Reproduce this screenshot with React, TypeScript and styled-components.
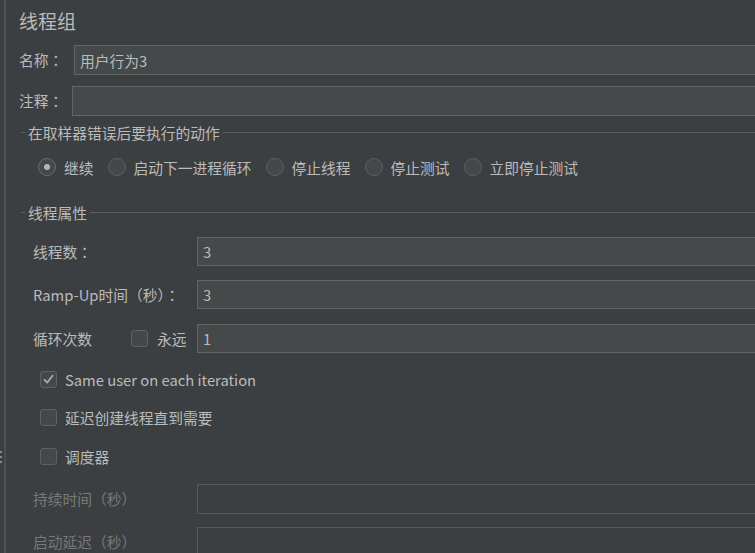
import styled, { createGlobalStyle } from "styled-components"

const GlobalStyle = createGlobalStyle`
  html, body {
    margin: 0;
    padding: 0;
    background: #3c3f41;
    overflow: hidden;
  }
  body {
    font-family: "Noto Sans CJK SC", "Noto Sans", sans-serif;
    color: #bbbbbb;
  }
`

const Page = styled.div`
  display: flex;
  width: 755px;
  height: 553px;
  overflow: hidden;
  background: #3c3f41;
`

const Splitter = styled.div`
  position: relative;
  width: 4px;
  flex-shrink: 0;
  border-right: 2px solid #4c5052;
`

const Grip = styled.div`
  position: absolute;
  left: 0;
  top: 451px;
  width: 2px;
  height: 13px;
  background: repeating-linear-gradient(
    to bottom,
    #8a8d8f 0 2px,
    transparent 2px 5px
  );
`

const Panel = styled.div`
  flex: 1;
  min-width: 0;
  padding-left: 13px;
  display: flex;
  flex-direction: column;
  font-size: 14.75px;
`

const Title = styled.div`
  margin-top: 5px;
  height: 32px;
  line-height: 32px;
  font-size: 19px;
  color: #bbbbbb;
`

// full-width punctuation centred in its cell, as the reference shows it
const Punct = styled.span`
  font-family: "Noto Sans CJK TC", "Noto Sans CJK SC", sans-serif;
`

const FieldRow = styled.div<{ $top: number }>`
  display: flex;
  align-items: center;
  margin-top: ${(p) => p.$top}px;
`

const Label = styled.span<{ $width?: number; $disabled?: boolean }>`
  flex-shrink: 0;
  width: ${(p) => (p.$width ? `${p.$width}px` : "auto")};
  color: ${(p) => (p.$disabled ? "#787878" : "#bbbbbb")};
  white-space: nowrap;
  line-height: 20px;
`

const TextInput = styled.div<{ $height?: number; $disabled?: boolean }>`
  flex: 1;
  margin-right: -20px;
  height: ${(p) => p.$height ?? 30}px;
  box-sizing: border-box;
  display: flex;
  align-items: center;
  padding-left: 5px;
  border: 1px solid ${(p) => (p.$disabled ? "#56595b" : "#646464")};
  background: ${(p) => (p.$disabled ? "#3c3f41" : "#45494a")};
  color: #bbbbbb;
  white-space: nowrap;
`

const Legend = styled.div<{ $top: number }>`
  display: flex;
  align-items: center;
  height: 20px;
  margin-top: ${(p) => p.$top}px;
  margin-right: -20px;
  &::before {
    content: "";
    width: 4px;
    height: 1px;
    margin-left: 2px;
    margin-right: 3px;
    background: #5b5e60;
  }
  &::after {
    content: "";
    flex: 1;
    height: 1px;
    margin-left: 3px;
    background: #5b5e60;
  }
`

const LegendText = styled.span`
  color: #bbbbbb;
  white-space: nowrap;
`

const Group = styled.div`
  display: flex;
  flex-direction: column;
  padding-left: 14px;
`

const RadioRow = styled.div`
  display: flex;
  align-items: center;
  height: 24px;
  margin-top: 13px;
  padding-left: 5px;
`

const RadioItem = styled.label`
  display: flex;
  align-items: center;
  margin-right: 14px;
  white-space: nowrap;
`

const RadioCircle = styled.span<{ $checked?: boolean }>`
  width: 18px;
  height: 18px;
  box-sizing: border-box;
  border-radius: 50%;
  margin-right: 8px;
  border: 1px solid ${(p) => (p.$checked ? "#6a6d6f" : "#5b5e60")};
  background: #43494a;
  display: flex;
  align-items: center;
  justify-content: center;
  &::after {
    content: "";
    display: ${(p) => (p.$checked ? "block" : "none")};
    width: 6px;
    height: 6px;
    border-radius: 50%;
    background: #b5b5b5;
  }
`

const InputRow = styled.div<{ $top: number }>`
  display: flex;
  align-items: center;
  margin-top: ${(p) => p.$top}px;
`

const CheckRow = styled.label<{ $top: number }>`
  display: flex;
  align-items: center;
  height: 24px;
  margin-top: ${(p) => p.$top}px;
  padding-left: 7px;
  white-space: nowrap;
`

const Box = styled.span<{ $gap?: number }>`
  width: 17px;
  height: 17px;
  box-sizing: border-box;
  flex-shrink: 0;
  border: 1px solid #5e6163;
  border-radius: 3px;
  background: #43494a;
  margin-right: ${(p) => p.$gap ?? 8}px;
  display: flex;
  align-items: center;
  justify-content: center;
`

const LoopLabel = styled.span`
  width: 98px;
  flex-shrink: 0;
  line-height: 20px;
`

const Forever = styled.span`
  width: 40px;
  flex-shrink: 0;
  line-height: 20px;
`

function Check({ checked, gap }: { checked?: boolean; gap?: number }) {
  return (
    <Box $gap={gap}>
      {checked && (
        <svg width="13" height="13" viewBox="0 0 13 13">
          <path
            d="M2.5 6.8 L5.2 9.6 L10.5 2.8"
            fill="none"
            stroke="#a8a8a8"
            strokeWidth="1.8"
            strokeLinecap="round"
            strokeLinejoin="round"
          />
        </svg>
      )}
    </Box>
  )
}

const actions = ["继续", "启动下一进程循环", "停止线程", "停止测试", "立即停止测试"]

export default function App() {
  return (
    <Page>
      <GlobalStyle />
      <Splitter>
        <Grip />
      </Splitter>
      <Panel>
        <Title>线程组</Title>

        <FieldRow $top={8}>
          <Label $width={55}>
            名称<Punct>：</Punct>
          </Label>
          <TextInput>用户行为3</TextInput>
        </FieldRow>
        <FieldRow $top={11}>
          <Label $width={53}>
            注释<Punct>：</Punct>
          </Label>
          <TextInput />
        </FieldRow>

        <Legend $top={6}>
          <LegendText>在取样器错误后要执行的动作</LegendText>
        </Legend>
        <Group>
          <RadioRow>
            {actions.map((a, i) => (
              <RadioItem key={a}>
                <RadioCircle $checked={i === 0} />
                {a}
              </RadioItem>
            ))}
          </RadioRow>
        </Group>

        <Legend $top={23}>
          <LegendText>线程属性</LegendText>
        </Legend>
        <Group>
          <InputRow $top={15}>
            <Label $width={164}>
              线程数<Punct>：</Punct>
            </Label>
            <TextInput $height={29}>3</TextInput>
          </InputRow>
          <InputRow $top={14}>
            <Label $width={164}>
              Ramp-Up时间<Punct>（</Punct>秒<Punct>）：</Punct>
            </Label>
            <TextInput $height={29}>3</TextInput>
          </InputRow>
          <InputRow $top={15}>
            <LoopLabel>循环次数</LoopLabel>
            <Check gap={9} />
            <Forever>永远</Forever>
            <TextInput $height={29}>1</TextInput>
          </InputRow>

          <CheckRow $top={14}>
            <Check checked />
            Same user on each iteration
          </CheckRow>
          <CheckRow $top={14}>
            <Check />
            延迟创建线程直到需要
          </CheckRow>
          <CheckRow $top={15}>
            <Check />
            调度器
          </CheckRow>

          <InputRow $top={16}>
            <Label $width={164} $disabled>
              持续时间<Punct>（</Punct>秒<Punct>）</Punct>
            </Label>
            <TextInput $height={30} $disabled />
          </InputRow>
          <InputRow $top={13}>
            <Label $width={164} $disabled>
              启动延迟<Punct>（</Punct>秒<Punct>）</Punct>
            </Label>
            <TextInput $height={30} $disabled />
          </InputRow>
        </Group>
      </Panel>
    </Page>
  )
}
